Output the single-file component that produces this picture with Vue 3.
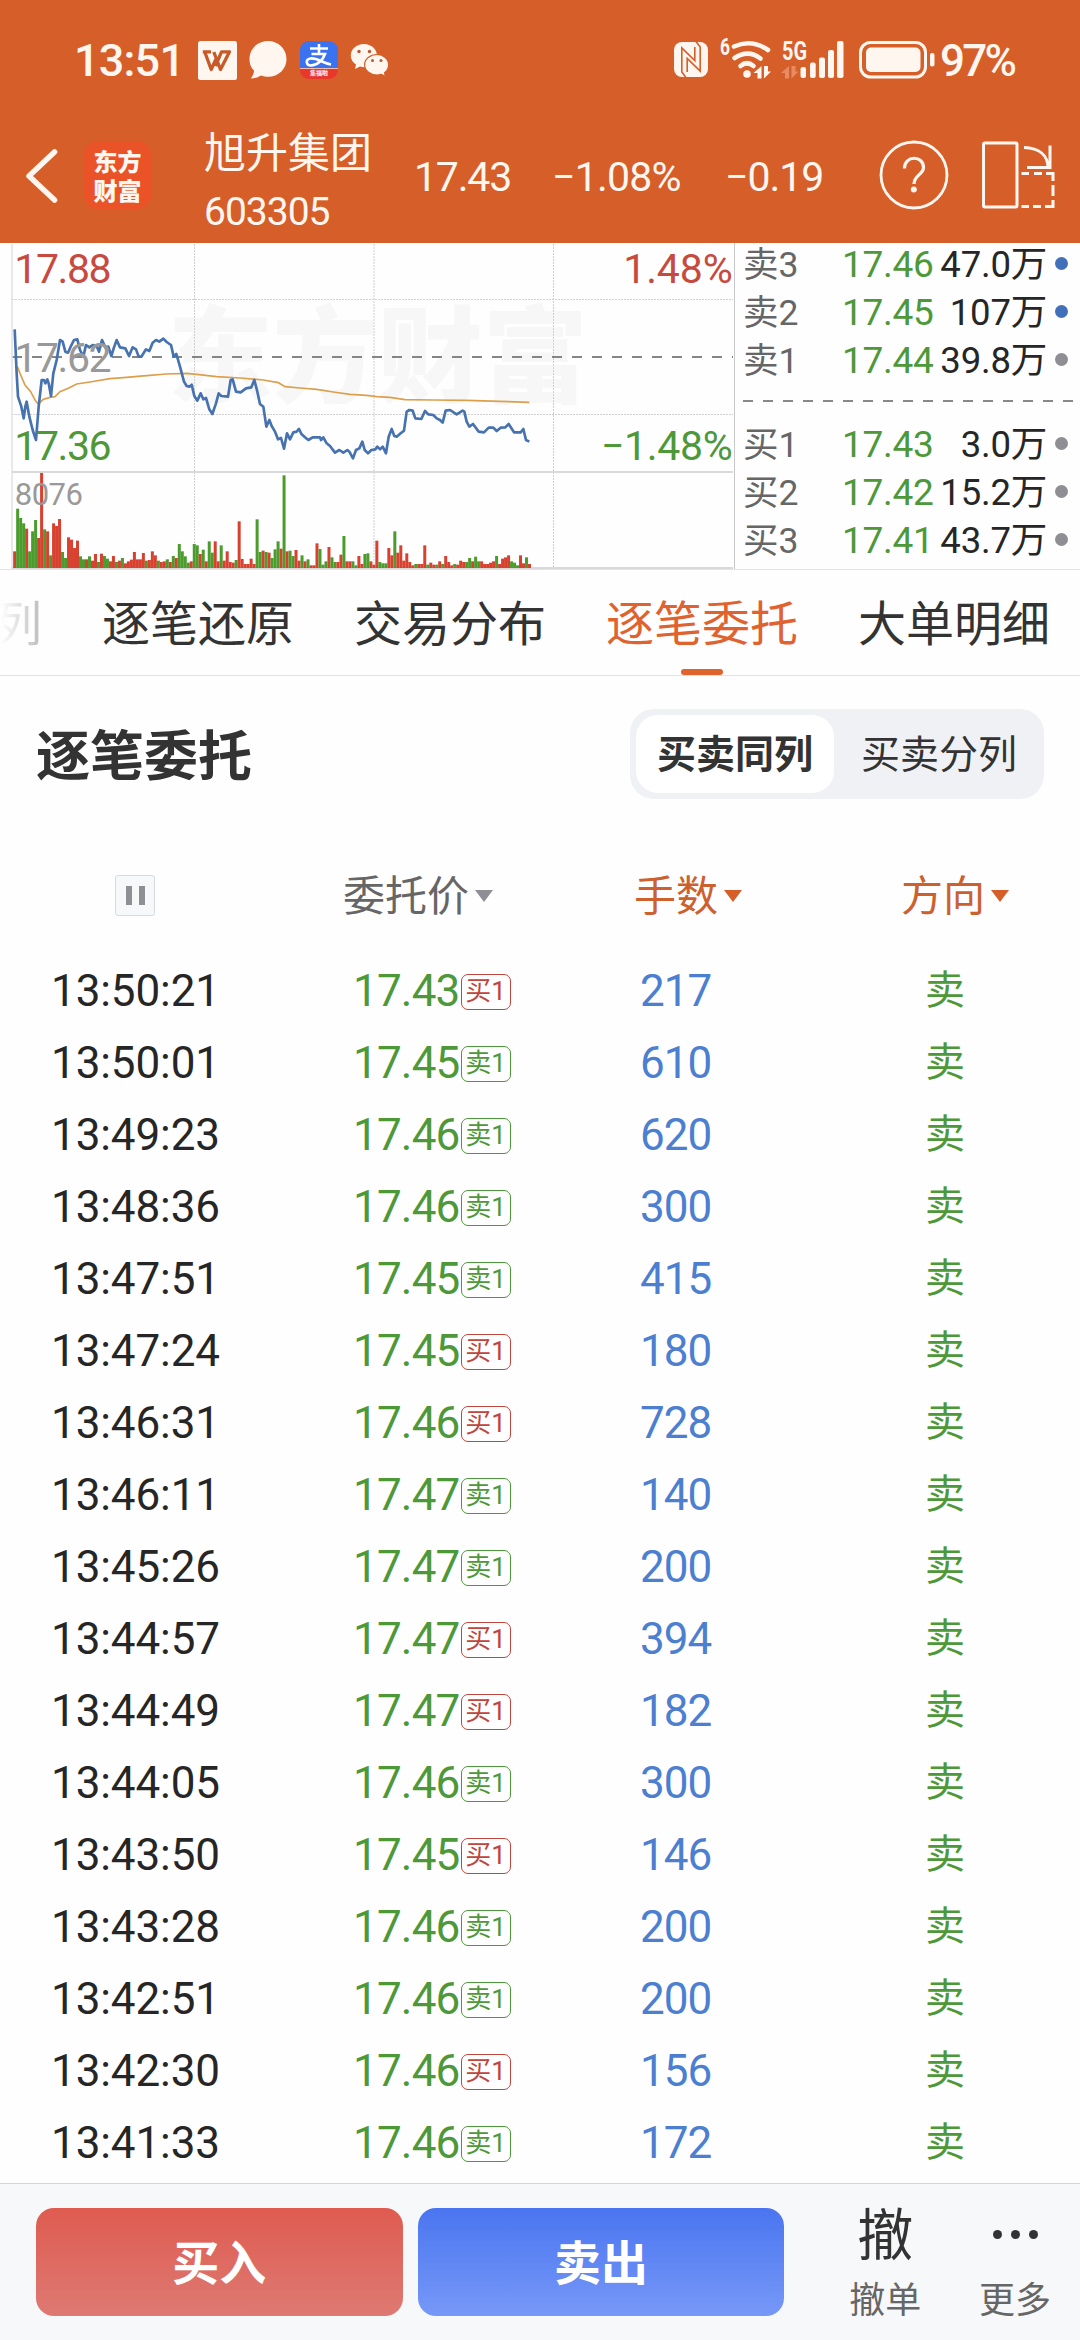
<script setup>
const asks = [
  { label: '卖3', price: '17.46', amount: '47.0万', hot: true },
  { label: '卖2', price: '17.45', amount: '107万', hot: true },
  { label: '卖1', price: '17.44', amount: '39.8万', hot: false },
]
const bids = [
  { label: '买1', price: '17.43', amount: '3.0万', hot: false },
  { label: '买2', price: '17.42', amount: '15.2万', hot: false },
  { label: '买3', price: '17.41', amount: '43.7万', hot: false },
]
const tabs = ['逐笔还原', '交易分布', '逐笔委托', '大单明细']
const activeTab = '逐笔委托'

const orders = [
  ['13:50:21', '17.43', '买1', 217],
  ['13:50:01', '17.45', '卖1', 610],
  ['13:49:23', '17.46', '卖1', 620],
  ['13:48:36', '17.46', '卖1', 300],
  ['13:47:51', '17.45', '卖1', 415],
  ['13:47:24', '17.45', '买1', 180],
  ['13:46:31', '17.46', '买1', 728],
  ['13:46:11', '17.47', '卖1', 140],
  ['13:45:26', '17.47', '卖1', 200],
  ['13:44:57', '17.47', '买1', 394],
  ['13:44:49', '17.47', '买1', 182],
  ['13:44:05', '17.46', '卖1', 300],
  ['13:43:50', '17.45', '买1', 146],
  ['13:43:28', '17.46', '卖1', 200],
  ['13:42:51', '17.46', '卖1', 200],
  ['13:42:30', '17.46', '买1', 156],
  ['13:41:33', '17.46', '卖1', 172],
]

// Intraday price and average lines, three units per pixel
const priceLine =
  '44,268 50,400 54,470 64,500 71,535 76,500 80,485 88,530 98,570 108,600 116,500 125,420 132,420 136,430 142,418 146,430 153,468 160,400 170,360 180,300 188,305 196,335 204,338 212,320 222,300 232,298 240,330 250,350 258,315 268,322 278,315 290,318 297,335 306,300 316,322 325,320 334,348 342,322 350,300 360,322 376,325 387,348 398,322 408,328 416,350 424,350 438,328 448,333 458,308 468,300 478,305 490,296 500,306 513,315 521,350 529,342 540,380 552,425 560,438 568,440 575,434 583,468 592,482 602,460 610,478 618,474 628,508 637,522 648,490 656,460 664,468 684,470 692,420 698,418 708,455 722,457 738,445 754,442 763,420 772,455 780,492 790,500 799,560 808,540 816,560 825,575 834,598 843,594 852,626 861,580 870,598 880,577 890,575 897,567 905,583 915,592 925,600 938,592 960,592 963,600 970,592 980,610 990,618 1005,638 1018,630 1030,638 1042,630 1048,635 1059,655 1068,630 1078,625 1087,605 1094,630 1104,640 1114,630 1126,628 1132,620 1140,628 1148,620 1158,640 1166,590 1175,567 1183,588 1190,590 1202,580 1212,572 1220,515 1228,510 1238,512 1246,535 1264,537 1275,513 1285,523 1300,525 1310,535 1320,540 1328,548 1337,512 1350,510 1370,523 1388,512 1393,515 1400,545 1408,560 1419,552 1436,575 1452,577 1466,563 1480,563 1490,573 1502,563 1516,562 1526,552 1542,577 1562,577 1570,567 1578,600 1588,605'
const averageLine =
  '52,380 60,400 75,435 92,455 105,480 115,492 130,478 150,472 165,470 180,455 205,445 230,432 270,426 330,416 370,413 440,407 500,402 560,400 590,403 650,410 720,414 790,420 835,428 855,440 900,444 950,448 1000,456 1050,463 1100,466 1130,470 1170,472 1215,479 1300,480 1400,481 1500,484 1588,487'

// Minute volumes: r = rising, g = falling, followed by the bar height
const volumes =
  'r50 g178 g150 g134 r118 g50 g110 g144 r90 r285 g116 r110 g38 r134 r126 r147 g48 g30 r92 r85 r60 r82 g35 g26 r26 g35 r22 r42 g18 r43 g36 g28 r20 r36 g18 r22 g30 r14 r20 r25 r48 r26 r26 r45 g22 r24 r50 r38 g22 r18 r20 g26 r18 g36 r30 g72 g50 g35 g16 r20 g72 g68 r42 g55 r20 g80 g46 r80 r20 g68 r22 r50 r18 r16 g24 r140 r27 r12 r12 r28 r12 g146 g48 r52 g48 r46 g30 g56 g80 r58 g278 r50 g52 g36 r54 r22 g38 r20 g26 r8 r8 r74 g57 g10 g20 r63 g32 g18 r18 r40 g96 r20 r20 g20 g8 r36 r12 g42 g44 r20 r10 r82 g18 g14 g14 r60 r38 g110 r46 r68 r22 r44 r18 r8 g12 r12 r12 r68 g10 r16 r10 g10 r20 g12 r36 r18 r8 g12 r10 r22 r18 g18 g30 r20 g34 g20 r20 r12 r12 r16 r20 g36 r12 r28 r32 r38 g20 g16 g8 r38 r14 g32 r12'
    .split(' ')
    .map((v, i) => ({ up: v[0] === 'r', h: Number(v.slice(1)), x: 39.5 + i * 8.98 }))
</script>

<template>
  <div class="screen">
    <header class="top">
      <div class="status">
        <span class="clock">13:51</span>
        <svg class="wps" width="39" height="39" viewBox="0 0 39 39">
          <rect width="39" height="39" rx="2.5" fill="#fff6f0" />
          <path d="M4.800 10.800H13M6.800 11L13.200 28.500L18.500 17M15.800 11L22.500 28.500L31.500 10.800H23.500L17.500 25" fill="none" stroke="#c65a28" stroke-width="3.300" stroke-linejoin="round" />
        </svg>
        <svg class="bubble" width="38" height="38" viewBox="0 0 38 38">
          <path d="M19 0C8.500 0 .5 8 .5 18C.5 23.500 2.500 27 5 29.500C5 32.500 3.500 35 2 37.500C6.500 37.500 9.500 36 12 34.500C14.500 35.500 16.500 35.800 19 35.800C29.500 35.800 37.500 28 37.500 18S29.500 0 19 0Z" fill="#fff6f0" />
        </svg>
        <div class="alipay">
          <svg width="38" height="27" viewBox="0 0 38 27">
            <path d="M10 7.500H28M19 3V13M11.500 13H25C23 19 17 24.500 11 24.500C6 24.500 5 18.500 10.500 17.500C17 16.500 22 22 31 23.500" fill="none" stroke="#fff" stroke-width="2.600" />
          </svg>
          <span>集福啦</span>
        </div>
        <svg class="wechat" width="39" height="34" viewBox="0 0 39 34">
          <path d="M14 1C6.500 1 .8 6.200 .8 12.500C.8 16.300 2.800 19.500 6 21.500L5 26L10 23.600C11.500 24 13 24.200 14.500 24.200C21.500 24 27 19 27 12.500S21 1 14 1Z" fill="#fff6f0" />
          <path d="M27 11.500C20 11.500 14.600 16 14.600 21.700S20 32 27 32C28.500 32 30 31.700 31.300 31.300L35.500 33.500L34.500 29.700C37 27.800 38.600 25 38.600 21.700C38.600 16 33.500 11.500 27 11.500Z" fill="#fff6f0" stroke="#d65e28" stroke-width="1.200" />
          <g fill="#b85a30"><circle cx="9" cy="8.500" r="1.700" /><circle cx="19.500" cy="8.500" r="1.700" /><circle cx="22.500" cy="17.500" r="1.500" /><circle cx="31" cy="17.500" r="1.500" /></g>
        </svg>
        <span class="spacer"></span>
        <svg class="signals" width="170" height="40" viewBox="0 0 170 40">
          <g fill="#fff6f0">
            <rect x="0" y="2" width="34" height="35" rx="8" />
            <path d="M12 37.500L7.800 32V8L20.800 20.500V7M22 1.500L26.200 7V31L13.200 18.500V32" fill="none" stroke="#d65e28" stroke-width="1.600" />
            <text x="46" y="15" textLength="10" lengthAdjust="spacingAndGlyphs" class="tiny">6</text>
            <g fill="none" stroke="#fff6f0" stroke-width="4.600" stroke-linecap="round">
              <path d="M60 6.500Q77.500 -1.500 94 10" />
              <path d="M60.500 18Q74 9 86.500 18.500" />
              <path d="M66.500 26Q73 20.500 79.500 26" />
            </g>
            <circle cx="73" cy="34" r="3.800" />
            <path d="M87.500 26V38.500H83.500V33H79.500ZM90 26H94V31.500H97L90 38.500Z" />
            <text x="108" y="19.500" textLength="25" lengthAdjust="spacingAndGlyphs" class="tiny net">5G</text>
            <path d="M115 26V38.500H111V33H107ZM117.500 26H121.500V31.500H124.500L117.500 38.500Z" fill="#e88a62" />
            <rect x="126.500" y="27" width="5.500" height="11" rx="2" />
            <rect x="136" y="22.500" width="5.700" height="15.500" rx="2" />
            <rect x="145" y="17.500" width="6" height="20.500" rx="2" />
            <rect x="154" y="10" width="6" height="28" rx="2" />
            <rect x="163" y="1" width="6.500" height="37" rx="2" />
          </g>
        </svg>
        <svg class="battery" width="77" height="38" viewBox="0 0 77 38">
          <rect x="1.500" y="1.500" width="65" height="34.500" rx="10" fill="none" stroke="#fff6f0" stroke-width="3" />
          <rect x="7" y="6.500" width="54.500" height="24.500" rx="5" fill="#fff6f0" />
          <rect x="71" y="12" width="4.500" height="13.500" rx="2" fill="#fff6f0" />
        </svg>
        <span class="percent">97%</span>
      </div>

      <div class="nav">
        <svg class="back" width="34" height="56" viewBox="0 0 34 56">
          <path d="M29.500 4L4 28L29.500 52" fill="none" stroke="#fff6f0" stroke-width="5.500" stroke-linecap="round" stroke-linejoin="round" />
        </svg>
        <div class="logo"><span>东方</span><span>财富</span></div>
        <div class="stock">
          <span class="name">旭升集团</span>
          <span class="code">603305</span>
        </div>
        <span class="quote last">17.43</span>
        <span class="quote pct">−1.08%</span>
        <span class="quote diff">−0.19</span>
        <svg class="help" width="70" height="70" viewBox="0 0 70 70">
          <circle cx="35" cy="35" r="33" fill="none" stroke="#fff6f0" stroke-width="2.800" />
          <path d="M25.500 28.500C25.500 15 44.500 15 44.500 27.500C44.500 34.500 35 35 35 44" fill="none" stroke="#fff6f0" stroke-width="3.200" />
          <circle cx="34.800" cy="49.500" r="3" fill="#fff6f0" />
        </svg>
        <svg class="rotate" width="73" height="68" viewBox="0 0 73 68">
          <g fill="none" stroke="#fff6f0" stroke-width="3">
            <rect x="1.500" y="2" width="33.500" height="64" rx="1.500" />
            <path d="M42 6.500C57 7 66 14 66 27M68 4.500V26.500H45" />
            <path d="M39.500 32.500H47M52 32.500H60M64 32.500H71V40M71 44V55M71 59V65.500H63M59 65.500H51M47 65.500H39.500" />
          </g>
        </svg>
      </div>
    </header>

    <section class="market">
      <svg class="chart" width="735" height="326" viewBox="0 9 2205 978">
        <text x="503" y="463" class="mark">东方财富</text>
        <g class="grid">
          <path d="M36 178.500H2199M36 523.500H2199M583.500 12V984M1122 12V984M1660.500 12V984" />
        </g>
        <path d="M36 351H2199" stroke="#858585" stroke-width="6" stroke-dasharray="30 30" />
        <path d="M36 12V987" stroke="#e4e4e4" stroke-width="5" />
        <path d="M36 696H2199M36 984H2199" stroke="#d9d9d9" stroke-width="6" />
        <path d="M2203.500 9V987" stroke="#c8c8c8" stroke-width="3" />
        <rect v-for="(v, i) in volumes" :key="i" :x="v.x" :y="984 - v.h" width="9" :height="v.h" :fill="v.up ? '#d8402f' : '#4a9c2d'" />
        <polyline :points="averageLine" fill="none" stroke="#dca04c" stroke-width="5" />
        <polyline :points="priceLine" fill="none" stroke="#4672b0" stroke-width="8" stroke-linejoin="round" />
        <g class="axis">
          <text x="43" y="128" textLength="292" fill="#c74a3f">17.88</text>
          <text x="43" y="395" textLength="292" fill="#999">17.62</text>
          <text x="43" y="661" textLength="292" fill="#4d9838">17.36</text>
          <text x="1870" y="128" textLength="328" fill="#c74a3f">1.48%</text>
          <text x="1803" y="661" textLength="395" fill="#4d9838">−1.48%</text>
          <text x="44" y="794" textLength="205" fill="#999" class="vol">8076</text>
        </g>
      </svg>
      <div class="book">
        <div v-for="r in asks" :key="r.label" class="level">
          <span class="lab">{{ r.label }}</span><span class="px">{{ r.price }}</span><span class="amt">{{ r.amount }}</span><i :class="{ hot: r.hot }"></i>
        </div>
        <svg class="split" width="331" height="36" viewBox="0 0 331 36"><path d="M0 16H331" stroke="#888" stroke-width="2" stroke-dasharray="10 10" /></svg>
        <div v-for="r in bids" :key="r.label" class="level">
          <span class="lab">{{ r.label }}</span><span class="px">{{ r.price }}</span><span class="amt">{{ r.amount }}</span><i :class="{ hot: r.hot }"></i>
        </div>
      </div>
    </section>

    <nav class="tabs">
      <span class="tab faded">列</span>
      <span v-for="t in tabs" :key="t" class="tab" :class="{ active: t === activeTab }">{{ t }}</span>
    </nav>

    <section class="heading">
      <h2>逐笔委托</h2>
      <div class="switch"><span class="on">买卖同列</span><span>买卖分列</span></div>
    </section>

    <section class="table">
      <div class="row head">
        <span class="c-time"><b class="pause"><i></i><i></i></b></span>
        <span class="c-price">委托价<em></em></span>
        <span class="c-qty sorted">手数<em></em></span>
        <span class="c-side sorted">方向<em></em></span>
      </div>
      <div v-for="o in orders" :key="o[0]" class="row">
        <span class="c-time">{{ o[0] }}</span>
        <span class="c-price">{{ o[1] }}<b class="badge" :class="{ buy: o[2] === '买1' }">{{ o[2] }}</b></span>
        <span class="c-qty">{{ o[3] }}</span>
        <span class="c-side">卖</span>
      </div>
    </section>

    <footer class="actions">
      <button class="buy">买入</button>
      <button class="sell">卖出</button>
      <div class="tool"><span class="glyph">撤</span><span>撤单</span></div>
      <div class="tool">
        <span class="glyph dots"><i></i><i></i><i></i></span><span>更多</span>
      </div>
    </footer>
  </div>
</template>

<style>
body {
  background: #fefefe;
}
</style>

<style scoped>
.screen {
  width: 1080px;
  height: 2340px;
  display: flex;
  flex-direction: column;
  overflow: hidden;
  background: #fefefe;
  color: #262626;
  font-family: Roboto, "Noto Sans CJK SC", sans-serif;
}
.top {
  height: 243px;
  background: #d65e28;
  color: #fff6f0;
  flex: none;
}
.status {
  height: 120px;
  display: flex;
  align-items: center;
  padding: 0 64px 0 74px;
  box-sizing: border-box;
}
.clock,
.percent {
  font-size: 45px;
  font-weight: 500;
  line-height: 50px;
  padding-top: 1px;
}
.clock {
  width: 124px;
  letter-spacing: -0.8px;
}
.percent {
  width: 76px;
  font-size: 44px;
  letter-spacing: -2.8px;
}
.bubble {
  margin-left: 12px;
}
.alipay {
  width: 38px;
  height: 38px;
  margin-left: 13px;
  border-radius: 9px;
  overflow: hidden;
  display: flex;
  flex-direction: column;
  background: linear-gradient(#3a72f0 0 27px, #f5b8a8 27px 28px, #e8382c 28px);
}
.alipay svg {
  flex: none;
}
.alipay span {
  font-size: 6px;
  line-height: 10px;
  font-weight: 700;
  text-align: center;
}
.wechat {
  margin-left: 12px;
}
.spacer {
  flex: 1;
}
.signals {
  overflow: visible;
}
.tiny {
  font-size: 24px;
  font-weight: 700;
}
.tiny.net {
  font-size: 25.5px;
}
.battery {
  margin: 0 4px 0 15px;
}
.nav {
  height: 123px;
  display: flex;
  align-items: flex-start;
  padding-left: 25px;
  box-sizing: border-box;
}
.nav > * {
  flex: none;
}
.back {
  margin: 28px 25px 0 0;
}
.logo {
  width: 67px;
  height: 68px;
  margin-top: 21px;
  border-radius: 14px;
  background: #ea5228;
  display: flex;
  flex-direction: column;
  align-items: center;
  justify-content: center;
  font: 900 24px/29px "Noto Sans CJK SC", sans-serif;
}
.stock {
  width: 210px;
  margin: 3px 0 0 53px;
  display: flex;
  flex-direction: column;
}
.name {
  font-size: 42px;
  line-height: 62px;
}
.code {
  font-size: 39px;
  line-height: 54px;
  letter-spacing: -1px;
}
.quote {
  margin-top: 27px;
  font-size: 41px;
  line-height: 60px;
}
.last {
  width: 138px;
  letter-spacing: -1.2px;
}
.pct {
  width: 173px;
  letter-spacing: -0.8px;
}
.diff {
  width: 154px;
  letter-spacing: -1px;
}
.help {
  margin-top: 20px;
}
.rotate {
  margin: 21px 0 0 33px;
}
.market {
  height: 326px;
  display: flex;
  border-bottom: 1px solid #e4e4e4;
  flex: none;
}
.chart {
  flex: none;
}
.mark {
  font: 900 315px "Noto Sans CJK SC", sans-serif;
  fill: #f7f7f7;
}
.grid path {
  stroke: #cfcfcf;
  stroke-width: 3;
  stroke-dasharray: 6 3;
  fill: none;
}
.axis text {
  font-size: 123px;
}
.axis .vol {
  font-size: 93px;
}
.book {
  display: flex;
  flex-direction: column;
  padding-left: 8px;
  margin-top: -2px;
}
.level {
  height: 48px;
  display: flex;
  align-items: center;
  font-size: 37px;
  line-height: 48px;
  white-space: nowrap;
}
.lab {
  width: 99px;
  color: #666;
  font-size: 35.5px;
}
.px {
  width: 93px;
  color: #4d9838;
  letter-spacing: -0.3px;
}
.amt {
  width: 112px;
  text-align: right;
  font-size: 36.5px;
  letter-spacing: -0.2px;
}
.level i {
  width: 13px;
  height: 13px;
  border-radius: 50%;
  margin: -3px 0 0 8px;
  background: #8f8e94;
}
.level i.hot {
  background: #4270b8;
}
.split {
  flex: none;
}
.tabs {
  height: 105px;
  border-bottom: 1px solid #e2e2e2;
  display: flex;
  gap: 60px;
  flex: none;
  margin-left: -6px;
}
.tab {
  position: relative;
  font-size: 48px;
  line-height: 109px;
  height: 105px;
  color: #333;
  white-space: nowrap;
}
.faded {
  background: linear-gradient(90deg, #fefefe 15%, #bbb);
  -webkit-background-clip: text;
  background-clip: text;
  color: transparent;
}
.active {
  color: #e0622f;
}
.active::after {
  content: "";
  position: absolute;
  left: 75px;
  bottom: 0;
  width: 42px;
  height: 6px;
  border-radius: 3px;
  background: #e0622f;
}
.heading {
  height: 157px;
  display: flex;
  justify-content: space-between;
  align-items: center;
  padding: 0 36px;
  flex: none;
}
h2 {
  margin: 7px 0 0;
  font-size: 54px;
  line-height: 80px;
  color: #333;
}
.switch {
  width: 414px;
  height: 90px;
  box-sizing: border-box;
  margin-top: -1px;
  padding: 6px;
  border-radius: 24px;
  background: #f0f1f4;
  display: flex;
  font-size: 39px;
  line-height: 80px;
  color: #333;
}
.switch span {
  flex: 1;
  text-align: center;
  padding-left: 6px;
}
.switch span.on {
  flex: none;
  box-sizing: border-box;
  width: 198px;
  padding: 0;
  height: 78px;
  border-radius: 22px;
  background: #fff;
  font-weight: 700;
}
.table {
  flex: none;
  padding-top: 6px;
  height: 1350px;
  box-sizing: border-box;
}
.row {
  height: 72px;
  display: grid;
  grid-template-columns: 300px 334px 266px 180px;
  font-size: 44px;
  line-height: 72px;
}
.row > span {
  display: flex;
  align-items: center;
  white-space: nowrap;
}
.head.row {
  height: 116px;
  font-size: 42px;
  color: #666;
}
.c-time {
  padding-left: 51px;
  letter-spacing: -0.1px;
}
.c-price {
  padding-left: 53px;
  color: #4d9838;
  letter-spacing: -0.8px;
}
.c-qty {
  padding-left: 6px;
  color: #4c7fd0;
  letter-spacing: -1px;
}
.c-side {
  padding-left: 25px;
  color: #4d9838;
  font-size: 40px;
}
.head > span {
  font-size: 42px;
  letter-spacing: 0;
}
.head .c-time {
  padding-left: 115px;
}
.head .c-price {
  padding-left: 43px;
  color: #666;
}
.head .c-qty {
  padding-left: 0;
}
.head .c-side {
  padding-left: 1px;
}
.head .sorted {
  color: #cc612e;
}
.head em {
  margin: -3px 0 0 6px;
  border: 9px solid transparent;
  border-top: 12px solid #8f8e94;
  border-bottom: 0;
}
.head .sorted em {
  border-top-color: #d65e28;
}
.pause {
  width: 40px;
  height: 41px;
  box-sizing: border-box;
  margin-top: -3px;
  border: 1px solid #d8dae2;
  border-radius: 3px;
  background: #f7f8fa;
  display: flex;
  justify-content: center;
  align-items: center;
  gap: 7px;
}
.pause i {
  width: 6px;
  height: 19px;
  background: #8f8e94;
}
.badge {
  width: 50px;
  height: 36px;
  box-sizing: border-box;
  border: 1.5px solid currentColor;
  border-radius: 7px;
  margin: 1px 0 0 1px;
  font-size: 26px;
  font-weight: 400;
  line-height: 33px;
  text-align: center;
  letter-spacing: 0;
}
.badge.buy {
  color: #c0453b;
}
.actions {
  flex: none;
  height: 157px;
  box-sizing: border-box;
  border-top: 1px solid #d5d6d8;
  background: #f7f8fa;
  display: flex;
  padding: 24px 0 0 36px;
}
button {
  width: 367px;
  height: 108px;
  margin: 0 15px 0 0;
  padding: 0 0 4px;
  border: 0;
  border-radius: 18px;
  color: #fff;
  font: 700 47px/104px "Noto Sans CJK SC", sans-serif;
}
.actions .buy {
  background: linear-gradient(#df5b50, #dd7a73);
}
.sell {
  background: linear-gradient(#4a75f0, #7698f7);
}
.tool {
  width: 130px;
  margin-left: 21px;
  display: flex;
  flex-direction: column;
  align-items: center;
  font-size: 36px;
  line-height: 50px;
  color: #666;
}
.tool + .tool {
  margin-left: 0;
}
.glyph {
  height: 68px;
  font-size: 56px;
  line-height: 56px;
  color: #333;
}
.dots {
  display: flex;
  gap: 9px;
}
.dots i {
  width: 9px;
  height: 9px;
  margin-top: 22px;
  border-radius: 50%;
  background: #333;
}
</style>
